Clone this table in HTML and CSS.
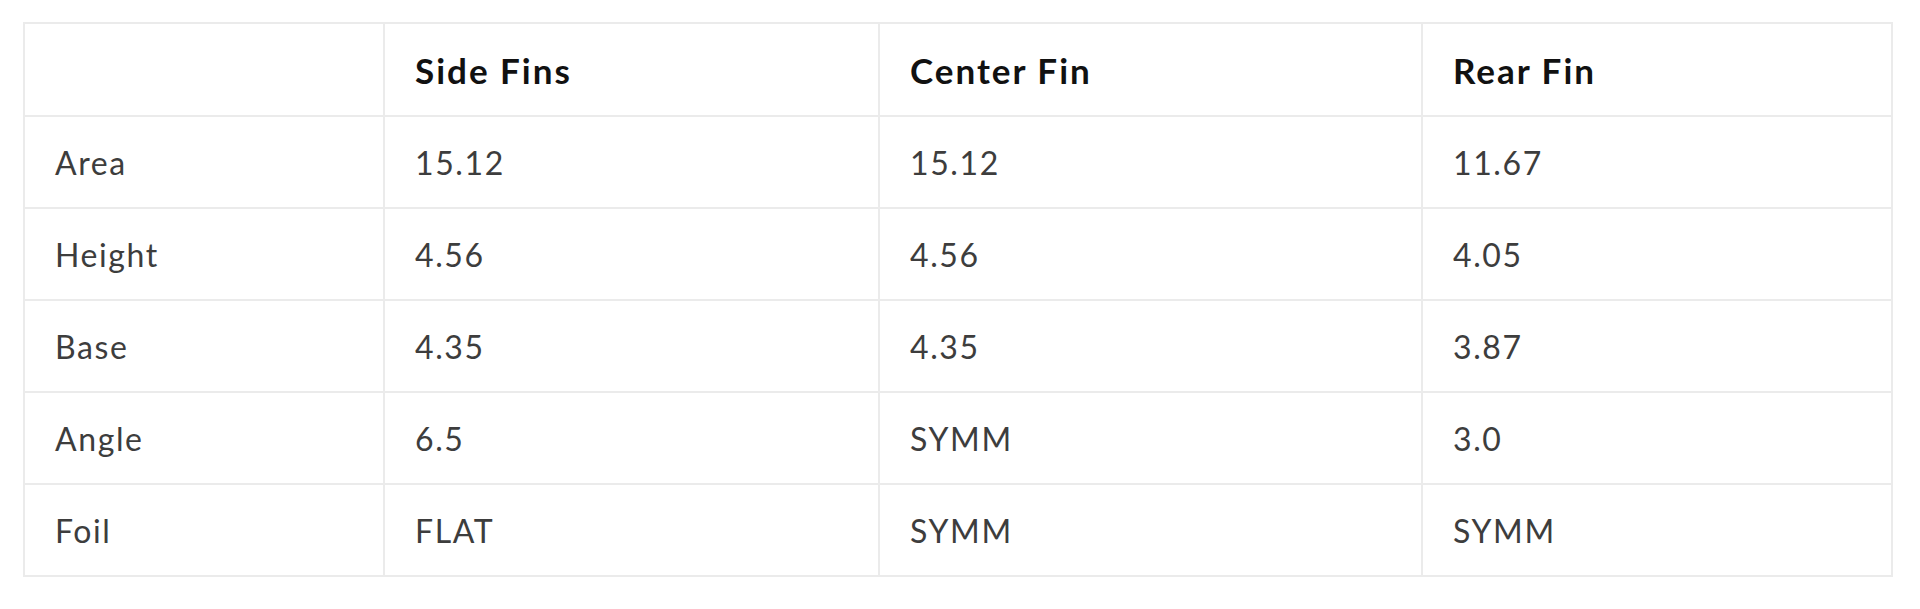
FILE: index.html
```html
<!DOCTYPE html>
<html lang="en">
<head>
<meta charset="utf-8">
<title>Fin Specs</title>
<link rel="stylesheet" href="styles.css">
</head>
<body>
<div class="wrap">
  <table class="specs">
    <colgroup>
      <col class="c-label">
      <col class="c-side">
      <col class="c-center">
      <col class="c-rear">
    </colgroup>
    <thead>
      <tr>
        <th></th>
        <th>Side Fins</th>
        <th>Center Fin</th>
        <th>Rear Fin</th>
      </tr>
    </thead>
    <tbody>
      <tr><td>Area</td><td>15.12</td><td>15.12</td><td>11.67</td></tr>
      <tr><td>Height</td><td>4.56</td><td>4.56</td><td>4.05</td></tr>
      <tr><td>Base</td><td>4.35</td><td>4.35</td><td>3.87</td></tr>
      <tr><td>Angle</td><td>6.5</td><td>SYMM</td><td>3.0</td></tr>
      <tr><td>Foil</td><td>FLAT</td><td>SYMM</td><td>SYMM</td></tr>
    </tbody>
  </table>
</div>
</body>
</html>
```
FILE: styles.css
```css
html, body {
  margin: 0;
  padding: 0;
  background: #ffffff;
}

.wrap {
  padding: 22px 27px 0 23px;
}

.specs {
  width: 100%;
  border-collapse: collapse;
  table-layout: fixed;
  font-family: Lato, "Open Sans", sans-serif;
}

.c-label { width: 360px; }
.c-side { width: 495px; }
.c-center { width: 543px; }
.c-rear { width: 470px; }

.specs th,
.specs td {
  border: 2px solid #ebebeb;
  text-align: left;
  vertical-align: middle;
  padding: 0 30px;
  height: 90px;
}

.specs th {
  font-size: 35px;
  font-weight: 700;
  color: #111111;
  letter-spacing: 2px;
  height: 91px;
}

.specs td {
  font-size: 32px;
  font-weight: 400;
  color: #3d3d3d;
  letter-spacing: 1.6px;
}
```
